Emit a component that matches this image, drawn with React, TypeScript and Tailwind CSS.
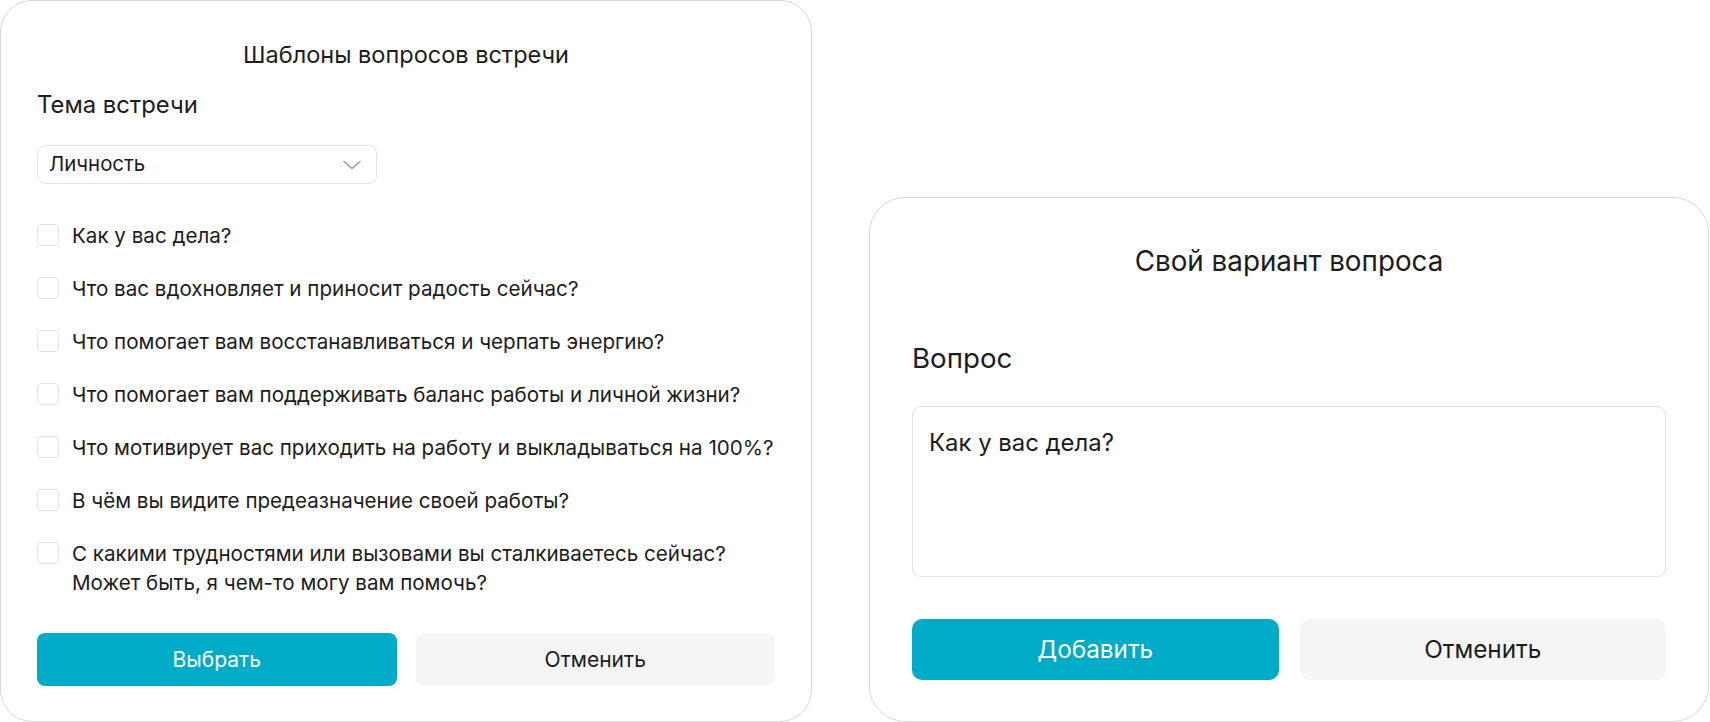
import { useState } from "react"

const questions = [
  "Как у вас дела?",
  "Что вас вдохновляет и приносит радость сейчас?",
  "Что помогает вам восстанавливаться и черпать энергию?",
  "Что помогает вам поддерживать баланс работы и личной жизни?",
  "Что мотивирует вас приходить на работу и выкладываться на 100%?",
  "В чём вы видите предеазначение своей работы?",
  "С какими трудностями или вызовами вы сталкиваетесь сейчас?\nМожет быть, я чем-то могу вам помочь?",
]

function Chevron() {
  return (
    <svg width="18" height="10" viewBox="0 0 18 10" fill="none">
      <path d="M1 1.5 L9 8.5 L17 1.5" stroke="#9a9a9a" strokeWidth="1.6" strokeLinecap="round" strokeLinejoin="round" />
    </svg>
  )
}

export default function App() {
  const [checked, setChecked] = useState<boolean[]>(questions.map(() => false))
  const [text, setText] = useState("Как у вас дела?")

  return (
    <div className="w-[1710px] h-[722px] bg-white flex items-end gap-[57px] text-[#1c1c1c] font-['Inter','Noto_Sans',sans-serif]">
      <div className="w-[812px] h-[722px] border border-[#d8d8d8] rounded-[32px] px-[36px] pt-[40px] flex flex-col">
        <h2 className="text-center text-[23.5px] leading-[28px]">Шаблоны вопросов встречи</h2>
        <div className="mt-[21px] text-[23.8px] leading-[30px]">Тема встречи</div>
        <div className="mt-[25px] w-[340px] h-[39px] border border-[#e3e3e3] rounded-[8px] flex items-center justify-between pl-[11px] pr-[15px] text-[20.4px]">
          <span>Личность</span>
          <Chevron />
        </div>
        <div className="mt-[37px] flex flex-col gap-[24px]">
          {questions.map((q, i) => (
            <label key={i} className="flex items-start gap-[13px] cursor-pointer">
              <input
                type="checkbox"
                checked={checked[i]}
                onChange={() => setChecked(checked.map((c, j) => (j === i ? !c : c)))}
                className="appearance-none mt-[3px] w-[22px] h-[22px] shrink-0 border border-[#e0e0e0] rounded-[5px] bg-white checked:bg-[#00abc8] checked:border-[#00abc8]"
              />
              <span className="text-[20.6px] leading-[29px] whitespace-pre">{q}</span>
            </label>
          ))}
        </div>
        <div className="mt-[36px] flex gap-[19px]">
          <button className="w-[361px] h-[53px] rounded-[8px] bg-[#00abc8] text-white text-[21px]">Выбрать</button>
          <button className="w-[361px] h-[53px] rounded-[8px] bg-[#f5f5f5] text-[21px]">Отменить</button>
        </div>
      </div>

      <div className="w-[840px] h-[525px] border border-[#d8d8d8] rounded-[36px] px-[42px] pt-[47px] flex flex-col">
        <h2 className="text-center text-[27.8px] leading-[32px]">Свой вариант вопроса</h2>
        <div className="mt-[65px] text-[27.7px] leading-[32px]">Вопрос</div>
        <textarea
          value={text}
          onChange={(e) => setText(e.target.value)}
          className="mt-[32px] h-[171px] w-full resize-none border border-[#e0e0e0] rounded-[9px] px-[16px] pt-[20px] text-[23.9px] leading-[32px] outline-none"
        />
        <div className="mt-[42px] flex gap-[21px]">
          <button className="flex-1 h-[61px] rounded-[10px] bg-[#00abc8] text-white text-[24.3px]">Добавить</button>
          <button className="flex-1 h-[61px] rounded-[10px] bg-[#f5f5f5] text-[24.3px]">Отменить</button>
        </div>
      </div>
    </div>
  )
}
